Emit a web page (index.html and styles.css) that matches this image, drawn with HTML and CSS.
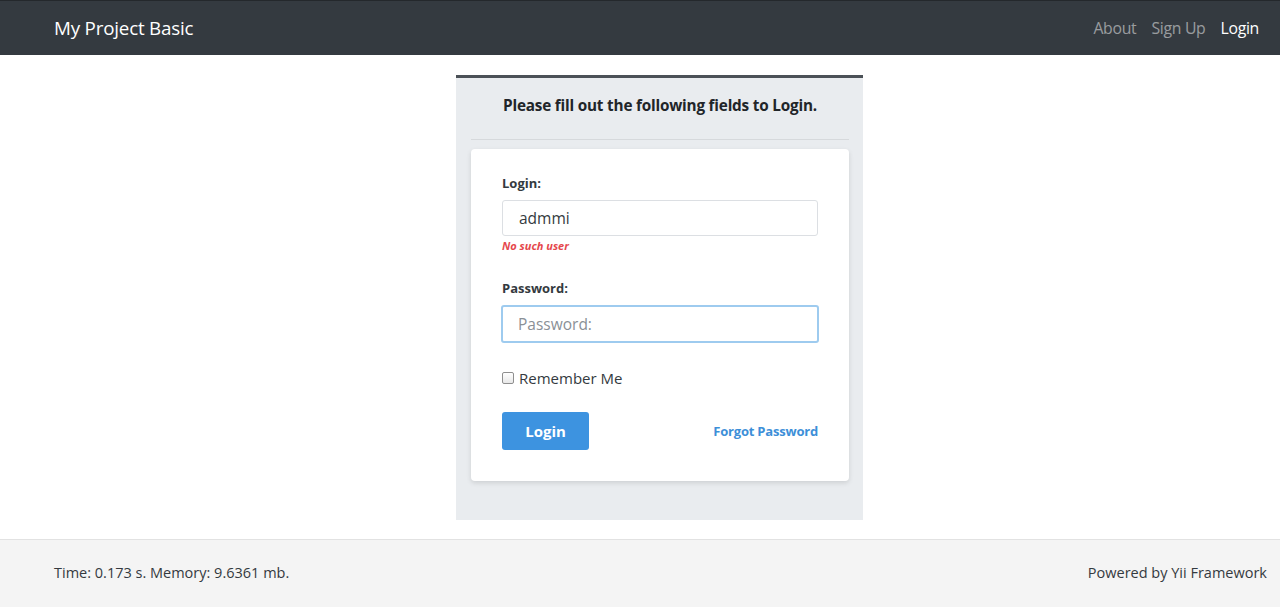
FILE: index.html
```html
<!DOCTYPE html>
<html lang="en">
<head>
<meta charset="utf-8">
<title>Login</title>
<link rel="stylesheet" href="styles.css">
</head>
<body>
<header class="navbar">
  <a class="brand" href="#">My Project Basic</a>
  <nav class="nav">
    <a href="#" class="nav-link">About</a>
    <a href="#" class="nav-link">Sign Up</a>
    <a href="#" class="nav-link active">Login</a>
  </nav>
</header>
<main class="main">
  <section class="panel">
    <h1 class="panel-title">Please fill out the following fields to Login.</h1>
    <hr class="divider">
    <form class="card">
      <div class="field">
        <label class="label">Login:</label>
        <input class="input" type="text" value="admmi">
        <div class="error">No such user</div>
      </div>
      <div class="field field-pass">
        <label class="label">Password:</label>
        <input class="input input-focus" type="password" placeholder="Password:">
      </div>
      <label class="check"><span class="box"></span>Remember Me</label>
      <div class="actions">
        <button type="button" class="btn">Login</button>
        <a href="#" class="forgot">Forgot Password</a>
      </div>
    </form>
  </section>
</main>
<footer class="footer">
  <span>Time: 0.173 s. Memory: 9.6361 mb.</span>
  <span>Powered by Yii Framework</span>
</footer>
</body>
</html>
```

FILE: styles.css
```css
* { box-sizing: border-box; }
html, body { margin: 0; padding: 0; }
body {
  font-family: "Open Sans", "Noto Sans", sans-serif;
  color: #212529;
  background: #fff;
  height: 607px;
  display: flex;
  flex-direction: column;
}
.navbar {
  height: 55px;
  background: #343a40;
  border-top: 1px solid #24282c;
  display: flex;
  align-items: center;
  justify-content: space-between;
  padding: 0 21px 0 54px;
}
.brand {
  color: #fff;
  text-decoration: none;
  font-size: 18.8px;
  letter-spacing: -0.2px;
}
.nav { display: flex; gap: 15px; }
.nav-link {
  color: rgba(255,255,255,0.5);
  text-decoration: none;
  font-size: 15.8px;
  letter-spacing: -0.3px;
}
.nav-link.active { color: #fff; }
.main {
  flex: 1;
  padding: 20px 0 19px 456px;
}
.panel {
  width: 407px;
  height: 445px;
  background: #e9ecef;
  border-top: 3px solid #4b5157;
  padding: 0 14px 0 15px;
  display: flex;
  flex-direction: column;
}
.panel-title {
  margin: 0;
  font-size: 15.3px;
  font-weight: 700;
  text-align: center;
  padding-top: 16px;
  line-height: 22px;
  letter-spacing: -0.2px;
}
.divider {
  border: 0;
  border-top: 1px solid #d6d9dc;
  margin: 23px 0 9px;
  height: 0;
}
.card {
  background: #fff;
  border-radius: 4px;
  box-shadow: 0 2px 5px rgba(0,0,0,0.12);
  padding: 25px 31px 30px 31px;
  height: 332px;
}
.field { display: flex; flex-direction: column; }
.label {
  font-size: 13px;
  font-weight: 700;
  color: #343a40;
  line-height: 18px;
  margin-bottom: 8px;
}
.input {
  width: 316px;
  height: 36px;
  border: 1px solid #dcdfe3;
  border-radius: 3px;
  padding: 0 16px;
  font-family: inherit;
  font-size: 15.5px;
  color: #343a40;
  outline: none;
}
.input::placeholder { color: #8a9096; }
.input-focus {
  border: 2px solid #9ecbef;
  height: 38px;
  width: 318px;
  margin-left: -1px;
  padding: 0 15px;
}
.error {
  color: #e5484d;
  font-size: 11px;
  font-style: italic;
  font-weight: 700;
  margin-top: 2px;
  line-height: 15px;
}
.field-pass { margin-top: 26px; }
.check {
  display: flex;
  align-items: center;
  margin-top: 25px;
  font-size: 15px;
  color: #343a40;
  line-height: 20px;
}
.box {
  width: 12px;
  height: 12px;
  border: 1px solid #8f8f8f;
  border-radius: 2px;
  background: linear-gradient(#fff, #e8e8e8);
  margin-right: 5px;
}
.actions {
  display: flex;
  justify-content: space-between;
  align-items: center;
  margin-top: 24px;
}
.btn {
  width: 87px;
  height: 38px;
  background: #3d93e0;
  color: #fff;
  border: 0;
  border-radius: 3px;
  font-family: inherit;
  font-size: 15px;
  font-weight: 700;
}
.forgot {
  color: #3d8fd8;
  font-size: 13px;
  font-weight: 700;
  text-decoration: none;
  letter-spacing: -0.2px;
}
.footer {
  height: 68px;
  background: #f4f4f4;
  border-top: 1px solid #e2e2e2;
  display: flex;
  align-items: center;
  justify-content: space-between;
  padding: 0 13px 3px 54px;
  font-size: 14.5px;
  color: #343a40;
}
```
